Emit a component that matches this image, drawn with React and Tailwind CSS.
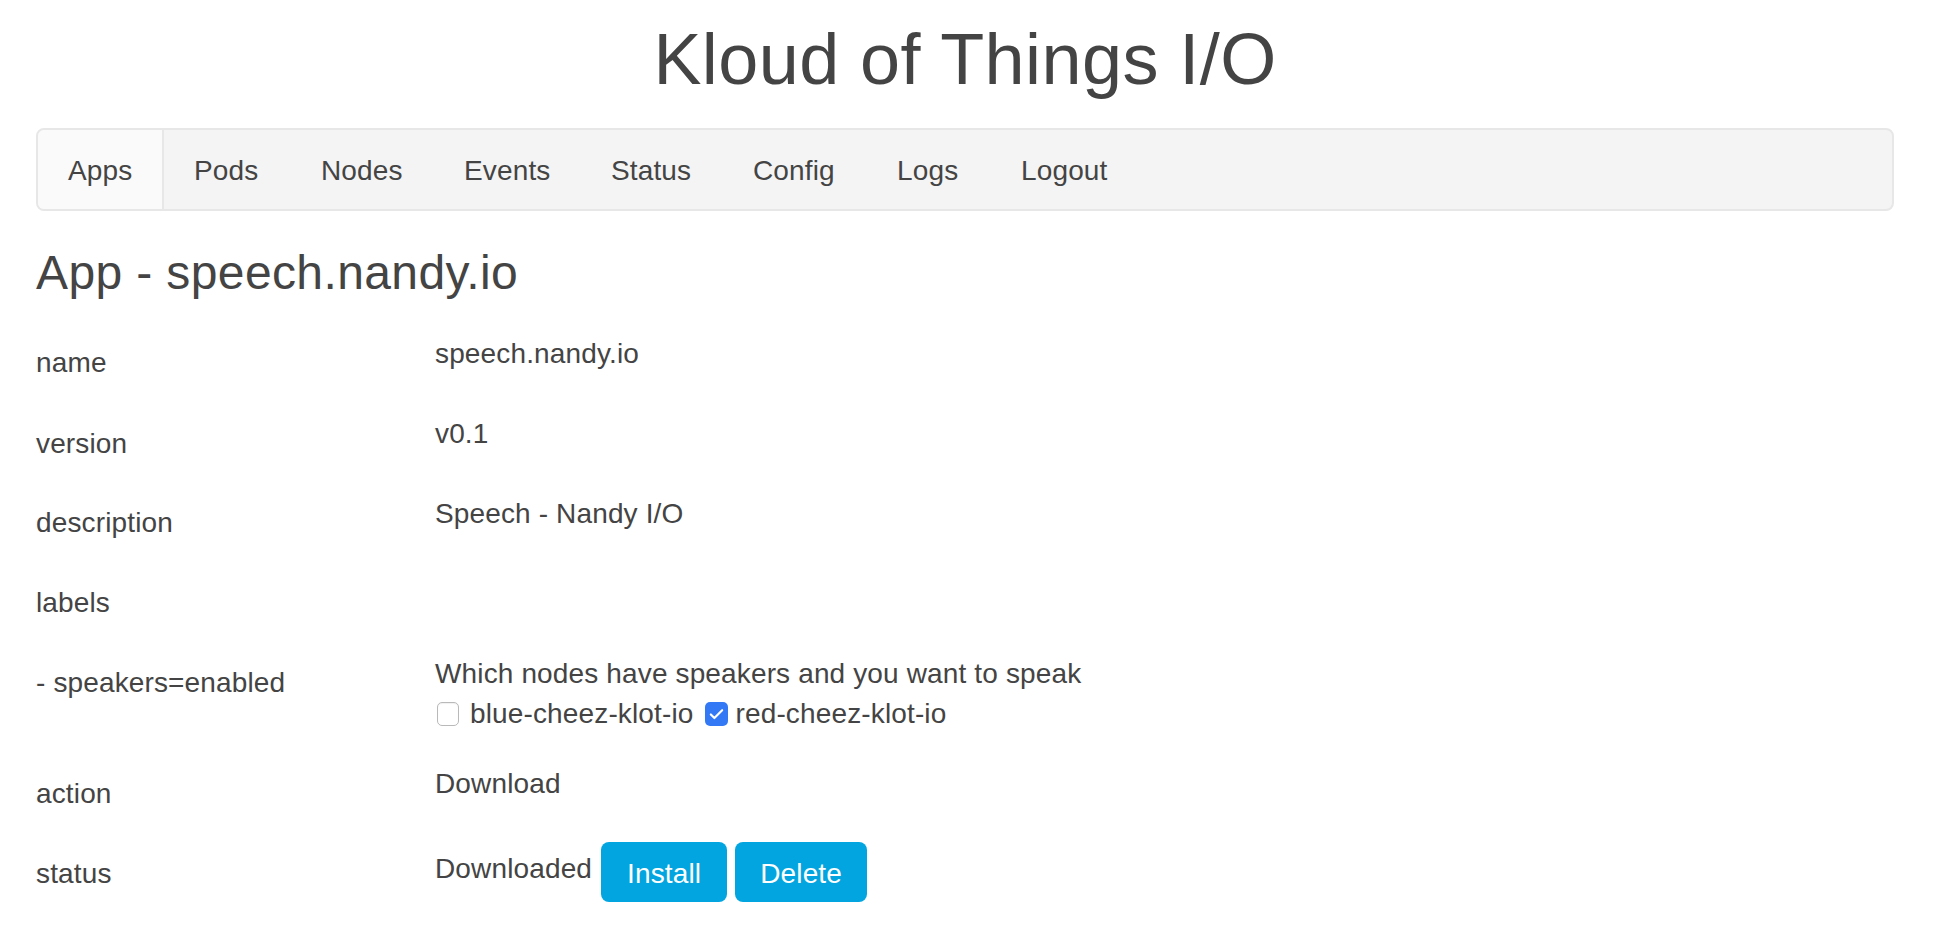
import { Check } from "lucide-react";

const navItems = [
  { name: "Apps", w: "w-[126px]" },
  { name: "Pods", w: "w-[127px]" },
  { name: "Nodes", w: "w-[143px]" },
  { name: "Events", w: "w-[147px]" },
  { name: "Status", w: "w-[142px]" },
  { name: "Config", w: "w-[144px]" },
  { name: "Logs", w: "w-[124px]" },
  { name: "Logout", w: "w-[150px]" },
];

function Row({ label, height = "h-[80px]", labelPad = "pt-[9px]", children }) {
  return (
    <div className={`flex ${height}`}>
      <div className={`w-[399px] shrink-0 leading-[40px] ${labelPad}`}>{label}</div>
      <div className="leading-[40px]">{children}</div>
    </div>
  );
}

function Checkbox({ checked }) {
  if (checked) {
    return (
      <span className="flex h-[24px] w-[23px] items-center justify-center rounded-[5px] bg-[#3379f6]">
        <Check size={17} strokeWidth={3} className="text-white" />
      </span>
    );
  }
  return <span className="block h-[24px] w-[22px] rounded-[5px] border border-[#b9b9b9] bg-white shadow-[inset_0_1px_1px_rgba(0,0,0,0.06)]" />;
}

export default function App() {
  return (
    <div className="min-h-screen bg-white font-['Liberation_Sans','Helvetica_Neue',Arial,sans-serif] text-[28px] tracking-[0.005em] text-[#444]">
      <div className="ml-[36px] mr-[40px]">
        <h1 className="pt-[20px] text-center text-[72px] leading-[79px] tracking-[0.006em]">Kloud of Things I/O</h1>

        <nav className="mt-[29px] flex h-[83px] rounded-[8px] border-2 border-[#e7e7e7] bg-[#f4f4f4]">
          {navItems.map((item, i) => (
            <a
              key={item.name}
              className={
                i === 0
                  ? `h-full ${item.w} rounded-l-[6px] border-r-2 border-[#e7e7e7] bg-[#fafafa] pl-[30px] pt-[21px] leading-[40px]`
                  : `h-full ${item.w} pl-[30px] pt-[21px] leading-[40px]`
              }
            >
              {item.name}
            </a>
          ))}
        </nav>

        <h3 className="mt-[35px] text-[48px] leading-[53px] tracking-[0.008em]">App - speech.nandy.io</h3>

        <div className="mt-[35px]">
          <Row label="name">speech.nandy.io</Row>
          <Row label="version" labelPad="pt-[10px]">v0.1</Row>
          <Row label="description">Speech - Nandy I/O</Row>
          <Row label="labels"></Row>
          <Row label="- speakers=enabled" height="h-[110px]">
            <div>Which nodes have speakers and you want to speak</div>
            <div className="flex h-[40px] items-center">
              <span className="ml-[2px]">
                <Checkbox />
              </span>
              <span className="ml-[11px]">blue-cheez-klot-io</span>
              <span className="ml-[11px]">
                <Checkbox checked />
              </span>
              <span className="ml-[8px]">red-cheez-klot-io</span>
            </div>
          </Row>
          <Row label="action" labelPad="pt-[10px]">Download</Row>
          <div className="flex">
            <div className="w-[399px] shrink-0 pt-[10px] leading-[40px]">status</div>
            <div className="flex items-start">
              <span className="mt-[5px] leading-[40px]">Downloaded</span>
              <button className="-mt-[2px] ml-[9px] h-[60px] rounded-[8px] bg-[#02a5df] px-[26px] pb-[8px] pt-[12px] leading-[40px] text-white">
                Install
              </button>
              <button className="-mt-[2px] ml-[8px] h-[60px] rounded-[8px] bg-[#02a5df] px-[25px] pb-[8px] pt-[12px] leading-[40px] text-white">
                Delete
              </button>
            </div>
          </div>
        </div>
      </div>
    </div>
  );
}
